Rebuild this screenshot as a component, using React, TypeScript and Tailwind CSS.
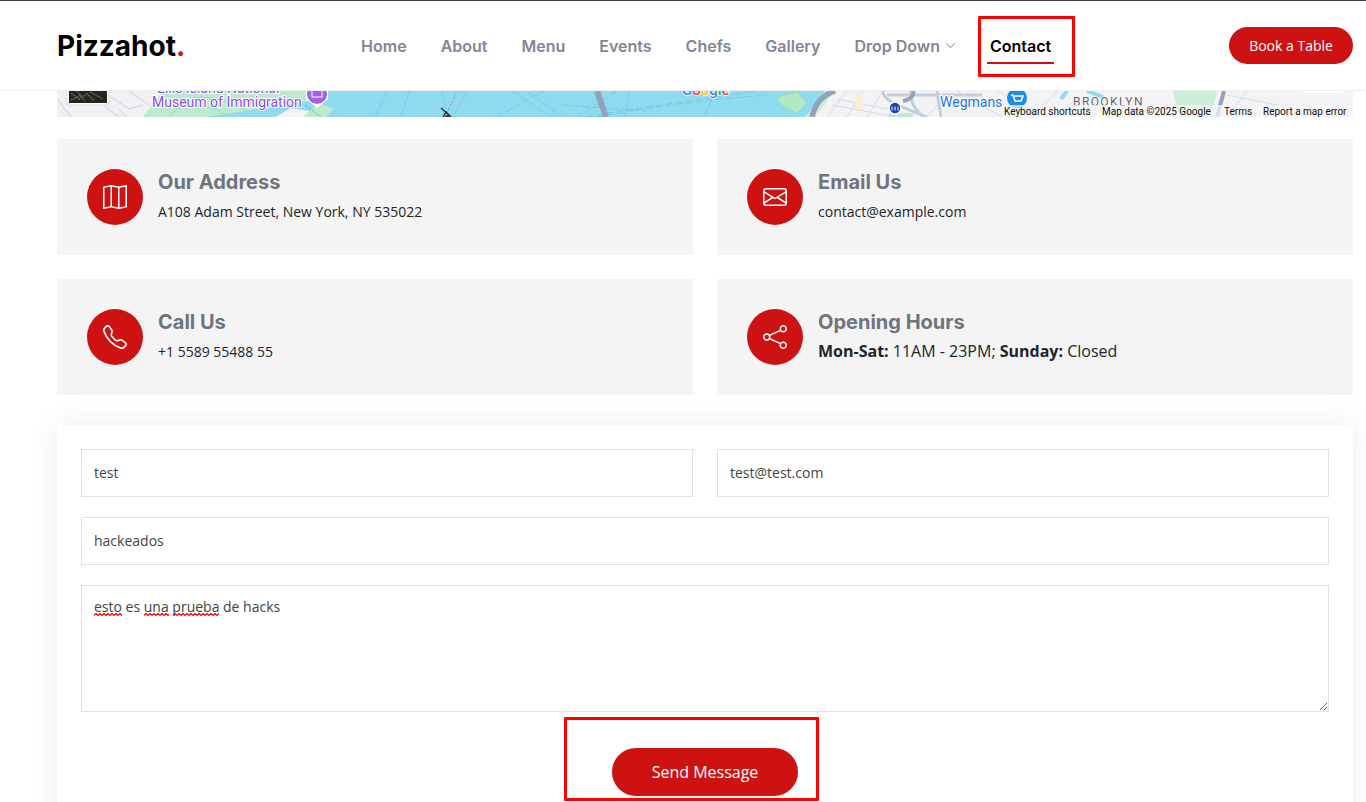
import { BsChevronDown, BsEnvelope, BsMap, BsShare, BsTelephone } from 'react-icons/bs';
import type { ReactNode } from 'react';

const navItems = ['Home', 'About', 'Menu', 'Events', 'Chefs', 'Gallery'];

function MapStrip() {
  return (
    <div className="mr-[13px] ml-[57px] h-[26px] overflow-hidden">
      <svg width="1296" height="26" viewBox="0 0 1296 26" className="block" style={{ fontFamily: 'Roboto, sans-serif' }}>
        <rect width="1296" height="26" fill="#8fdaef" />
        {/* left shore */}
        <path d="M0 0H112L86 26H0Z" fill="#f1f0f3" />
        <path d="M106 0H252V10L150 26H86Z" fill="#bdeacf" />
        <path d="M218 26L234 17L252 20L250 26Z" fill="#f4f3f5" />
        <path d="M246 26L262 12L276 18L270 26Z" fill="#bdeacf" />
        <path d="M248 14L264 26" stroke="#777" strokeWidth="0.8" strokeDasharray="1.5 1.5" fill="none" />
        <path d="M0 8L14 26M48 16L62 26M54 6L72 18L86 14M62 18L70 26M72 0L92 14" stroke="#d5dce6" strokeWidth="1.5" fill="none" />
        <path d="M112 26C122 10 150 10 172 26M130 8C150 4 170 8 190 20" stroke="#97dbb5" fill="none" />
        {/* channels */}
        <path d="M330 0L318 26M352 0L344 26M410 0L396 26M440 26L486 0M455 0L495 26M470 0L505 26M520 26L560 0M505 14L590 20M385 0L390 26M530 26C570 18 620 12 700 0M540 26C590 16 640 10 710 4M660 0L646 26M572 0L568 26"
          stroke="#6bc7e6" strokeWidth="0.8" strokeDasharray="7 3" fill="none" />
        <path d="M388 26L400 0" stroke="#8a8f96" strokeWidth="0.8" strokeDasharray="2 2" />
        <path d="M540 0L549 26" stroke="#8fa3bd" strokeWidth="6" />
        {/* plane */}
        <path d="M384 17L392 24L388 26H394L389 21L386 26" stroke="#333" strokeWidth="1.4" fill="none" />
        {/* right shore */}
        <path d="M720 6L740 1L750 12L740 22L724 14Z" fill="#b4e8c4" stroke="#9adcb0" />
        <path d="M752 26L772 0H1296V26Z" fill="#f3f2f5" />
        <path d="M748 26L768 0H778L758 26Z" fill="#cdeed6" />
        <path d="M755 26C758 12 766 4 778 0" stroke="#8fa3bd" strokeWidth="5.5" fill="none" />
        <path d="M780 8L830 18M790 0L770 26M806 0L790 26M826 0L810 26M775 14L840 26" stroke="#d5dce6" fill="none" />
        <rect x="798" y="2" width="6" height="16" fill="#f8efd2" />
        <path d="M826 0C826 10 840 14 870 26M854 0C852 10 858 18 866 26M880 0L884 26M830 4H925" stroke="#c3ced9" strokeWidth="3" fill="none" />
        <path d="M856 0C858 5 852 9 846 10" stroke="#8fa3bd" strokeWidth="4" fill="none" />
        <rect x="832" y="22" width="24" height="4" fill="#bdeacf" />
        <path d="M870 26C876 18 880 14 884 12M900 0L945 26M1000 0L975 26M940 0L990 26M1190 0L1170 26M1170 4L1250 20" stroke="#d5dce6" fill="none" />
        <path d="M1116 0H1160L1154 26H1122Z" fill="#cdeed6" />
        <path d="M1010 0L1004 8M1030 0L1046 6" stroke="#8fdaef" strokeWidth="4" fill="none" />
        <path d="M1167 0L1160 26" stroke="#8fa3bd" strokeWidth="4" />
        <rect x="1246" y="0" width="40" height="2" fill="#fff" />
        {/* thumbnail */}
        <rect x="10" y="-4" width="42" height="18" fill="#fff" stroke="#c8c8c8" strokeWidth="0.6" />
        <rect x="12" y="-4" width="38" height="16" fill="#23251f" />
        <path d="M14 2L22 8L30 3L38 10M20 0L28 10M33 1L46 8M14 9L24 4" stroke="#666b58" strokeWidth="1.5" strokeDasharray="2 1" fill="none" />
        {/* poi */}
        <text x="100" y="2" fontSize="14" fill="#8a4fe0" stroke="#fff" strokeWidth="2" paintOrder="stroke">Ellis Island National</text>
        <text x="95" y="16" fontSize="14" fill="#8a4fe0" stroke="#fff" strokeWidth="2" paintOrder="stroke">Museum of Immigration</text>
        <path d="M249 8L260 17L271 8V0H249Z" fill="#fff" />
        <circle cx="260" cy="3" r="10" fill="#a262e6" />
        <rect x="255" y="-2" width="10" height="8" fill="none" stroke="#fff" />
        <text x="625" y="3.5" fontSize="15" fontWeight="500" stroke="#fff" strokeWidth="1.5" paintOrder="stroke">
          <tspan fill="#4285f4">G</tspan><tspan fill="#ea4335">o</tspan><tspan fill="#fbbc05">o</tspan><tspan fill="#4285f4">g</tspan><tspan fill="#34a853">l</tspan><tspan fill="#ea4335">e</tspan>
        </text>
        <circle cx="838" cy="17" r="6" fill="#1a3fb0" stroke="#fff" strokeWidth="1.5" />
        <path d="M835 19.5V15.5M838 19.5V15.5M841 19.5V15.5" stroke="#fff" strokeWidth="1" />
        <text x="883" y="16" fontSize="14" fill="#1a73e8" stroke="#fff" strokeWidth="2" paintOrder="stroke">Wegmans</text>
        <circle cx="960" cy="7" r="10" fill="#1a8cf0" />
        <path d="M954 4H956L958 10H964L966 5H957" stroke="#fff" strokeWidth="1.6" fill="none" />
        <text x="1016" y="15" fontSize="12" letterSpacing="1.4" fill="#5f6368" stroke="#fff" strokeWidth="1" paintOrder="stroke">BROOKLYN</text>
        {/* attribution */}
        <rect x="945" y="14" width="351" height="12" fill="#f5f5f5" opacity="0.75" />
        <g fontSize="10" fill="#111">
          <text x="947" y="24">Keyboard shortcuts</text>
          <text x="1045" y="24">Map data ©2025 Google</text>
          <text x="1167" y="24">Terms</text>
          <text x="1206" y="24">Report a map error</text>
        </g>
      </svg>
    </div>
  );
}

function InfoCard({ icon, title, children }: { icon: ReactNode; title: string; children: ReactNode }) {
  return (
    <div className="flex h-[116px] items-start gap-[15px] bg-[#f4f4f4] p-[30px]">
      <div className="flex h-14 w-14 shrink-0 items-center justify-center rounded-full bg-[#ce1212] text-white">{icon}</div>
      <div>
        <h3 className="mb-[6px] font-['Inter',sans-serif] text-[20px] leading-[26px] font-bold text-[#6c757d]">{title}</h3>
        {children}
      </div>
    </div>
  );
}

const fieldClass =
  "h-12 w-full border border-[#dee2e6] bg-white px-3 pb-0.5 font-['Open_Sans',sans-serif] text-sm text-[#444444] outline-none";

function Squiggle({ left, width }: { left: number; width: number }) {
  const d = Array.from({ length: Math.ceil(width / 4) }, (_, i) => `M${i * 4} 2.5L${i * 4 + 2} 0.5L${i * 4 + 4} 2.5`).join('');
  return (
    <svg className="pointer-events-none absolute top-[28px]" style={{ left }} width={width} height="3">
      <path d={d} stroke="#f00000" strokeWidth="1.2" fill="none" />
    </svg>
  );
}

export default function App() {
  return (
    <div className="relative h-[802px] overflow-hidden bg-white font-['Open_Sans',sans-serif] text-[#212529]">
      <header className="flex h-[91px] items-center justify-between border-t border-b border-t-[#3a3f47] border-b-[#eeeeee] bg-white pr-[13px] pl-[57px]">
        <a className="font-['Inter',sans-serif] text-[28px] leading-none font-bold text-black">
          Pizzahot<span className="text-[#ce1212]">.</span>
        </a>
        <nav className="mr-[2px] flex items-center gap-[34px] font-['Inter',sans-serif] text-base font-semibold text-[#858595]">
          {navItems.map((item) => (
            <a key={item}>{item}</a>
          ))}
          <a className="flex items-center gap-[5px]">
            Drop Down <BsChevronDown className="h-[11px] w-[11px]" />
          </a>
          <a className="relative font-semibold text-black">
            Contact
            <span className="absolute -right-[3px] -bottom-[6px] -left-[3px] h-0.5 bg-[#ce1212]" />
          </a>
        </nav>
        <button className="h-[37px] w-[124px] rounded-full bg-[#ce1212] text-sm text-white">Book a Table</button>
      </header>

      <MapStrip />

      <main className="mt-[22px] pr-[13px] pl-[57px]">
        <div className="grid grid-cols-2 gap-6">
          <InfoCard icon={<BsMap className="h-6 w-6" />} title="Our Address">
            <p className="text-sm leading-[21px]">A108 Adam Street, New York, NY 535022</p>
          </InfoCard>
          <InfoCard icon={<BsEnvelope className="h-6 w-6" />} title="Email Us">
            <p className="text-sm leading-[21px]">contact@example.com</p>
          </InfoCard>
          <InfoCard icon={<BsTelephone className="h-6 w-6" />} title="Call Us">
            <p className="text-sm leading-[21px]">+1 5589 55488 55</p>
          </InfoCard>
          <InfoCard icon={<BsShare className="h-6 w-6" />} title="Opening Hours">
            <p className="text-base leading-[21px]">
              <strong className="font-bold">Mon-Sat:</strong> 11AM - 23PM; <strong className="font-bold">Sunday:</strong> Closed
            </p>
          </InfoCard>
        </div>

        <form className="mt-[30px] bg-white p-6 shadow-[0_0_30px_rgba(0,0,0,0.08)]">
          <div className="grid grid-cols-2 gap-6">
            <input className={fieldClass} defaultValue="test" />
            <input className={fieldClass} defaultValue="test@test.com" />
          </div>
          <input className={`${fieldClass} mt-5`} defaultValue="hackeados" />
          <div className="relative mt-5">
            <textarea
              spellCheck={false}
              className="block h-[127px] w-full border border-[#dee2e6] bg-white px-3 py-[10px] text-sm leading-[21px] text-[#444444] outline-none"
              defaultValue="esto es una prueba de hacks"
            />
            <Squiggle left={13} width={28} />
            <Squiggle left={63} width={25} />
            <Squiggle left={92} width={46} />
          </div>
          <div className="mt-9 flex justify-center">
            <button type="button" className="h-12 w-[186px] rounded-full bg-[#ce1212] text-base text-white">
              Send Message
            </button>
          </div>
          <div className="h-10" />
        </form>
      </main>

      {/* red annotation boxes drawn over the screenshot */}
      <div className="absolute top-4 left-[978px] h-[61px] w-[97px] rounded-[1px] border-[3px] border-[#ff0000]" />
      <div className="absolute top-[717px] left-[564px] h-[84px] w-[255px] rounded-[1px] border-[3px] border-[#ff0000]" />
    </div>
  );
}
